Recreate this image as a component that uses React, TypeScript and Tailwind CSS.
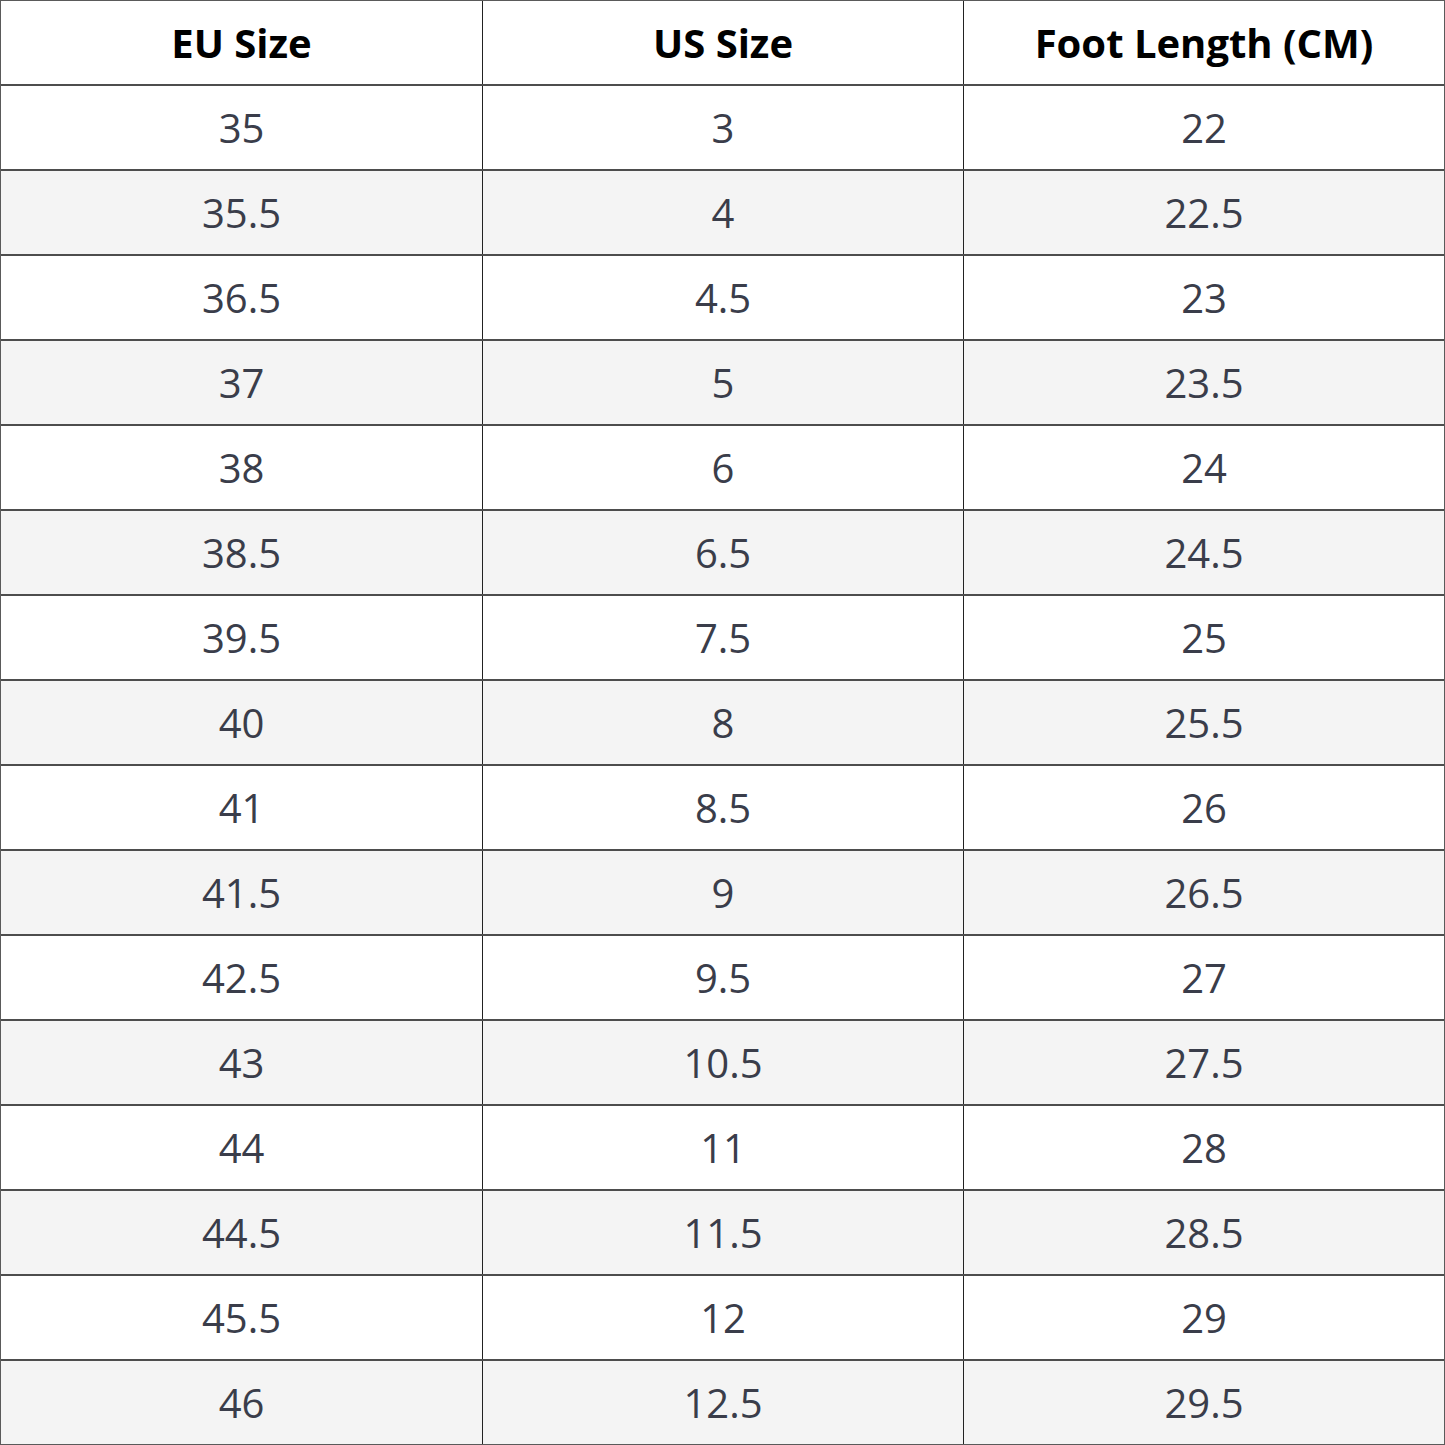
import React from "react";

const rows: [string, string, string][] = [
  ["35", "3", "22"],
  ["35.5", "4", "22.5"],
  ["36.5", "4.5", "23"],
  ["37", "5", "23.5"],
  ["38", "6", "24"],
  ["38.5", "6.5", "24.5"],
  ["39.5", "7.5", "25"],
  ["40", "8", "25.5"],
  ["41", "8.5", "26"],
  ["41.5", "9", "26.5"],
  ["42.5", "9.5", "27"],
  ["43", "10.5", "27.5"],
  ["44", "11", "28"],
  ["44.5", "11.5", "28.5"],
  ["45.5", "12", "29"],
  ["46", "12.5", "29.5"],
];

export default function App() {
  return (
    <div className="w-[1445px] h-[1445px] bg-white border border-[#5a5a5a] flex flex-col" style={{ fontFamily: '"Open Sans", "Liberation Sans", sans-serif' }}>
      <div className="grid grid-cols-3 flex-1 border-b-2 border-[#4d4d4d] text-black font-bold text-[40px]">
        <div className="flex items-center justify-center">EU Size</div>
        <div className="flex items-center justify-center border-l border-[#222]">US Size</div>
        <div className="flex items-center justify-center border-l border-[#222]">Foot Length (CM)</div>
      </div>
      {rows.map((r, i) => (
        <div
          key={i}
          className={
            "grid grid-cols-3 flex-1 text-[40px] text-[#3a3d4a] " +
            (i % 2 === 1 ? "bg-[#f4f4f4] " : "bg-white ") +
            (i < rows.length - 1 ? "border-b-2 border-[#4d4d4d]" : "")
          }
        >
          <div className="flex items-center justify-center">{r[0]}</div>
          <div className="flex items-center justify-center border-l border-[#222]">{r[1]}</div>
          <div className="flex items-center justify-center border-l border-[#222]">{r[2]}</div>
        </div>
      ))}
    </div>
  );
}
